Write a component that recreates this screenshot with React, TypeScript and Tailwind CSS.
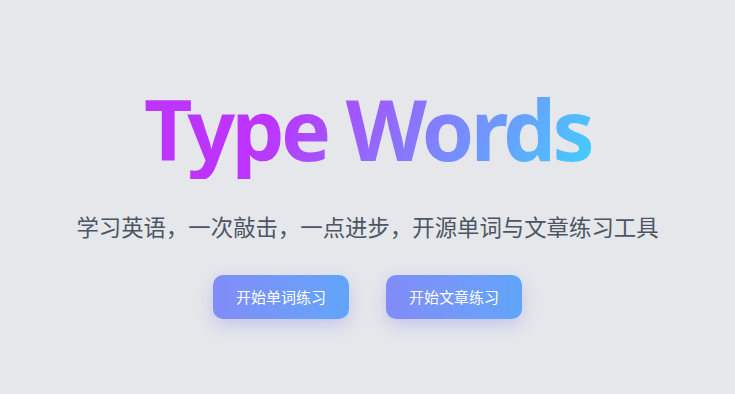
import React from 'react';

const btn =
    'w-[136px] h-[44px] rounded-[10px] bg-gradient-to-r from-[#818cf8] to-[#60a5fa] text-white text-[15px] shadow-[0_6px_16px_rgba(99,102,241,0.25)]';

const App: React.FC = () => {
    return (
        <div className="w-full h-[394px] bg-[#e5e7eb] flex flex-col items-center overflow-hidden font-['Noto_Sans','Noto_Sans_CJK_SC',sans-serif]">
            {/* Hero title */}
            <h1 className="mt-[79px] text-[84px] leading-[100px] font-bold tracking-[-3.6px] bg-[linear-gradient(120deg,#bd34fe_30%,#41d1ff)] bg-clip-text text-transparent">
                Type Words
            </h1>

            {/* Tagline */}
            <p className="mt-[32px] text-[22.4px] leading-[30px] text-[#4b5563] font-['Noto_Sans_CJK_SC',sans-serif]">
                学习英语，一次敲击，一点进步，开源单词与文章练习工具
            </p>

            {/* Actions */}
            <div className="mt-[34px] flex gap-[37px] font-['Noto_Sans_CJK_SC',sans-serif]">
                <button className={btn}>开始单词练习</button>
                <button className={btn}>开始文章练习</button>
            </div>
        </div>
    );
};

export default App;
